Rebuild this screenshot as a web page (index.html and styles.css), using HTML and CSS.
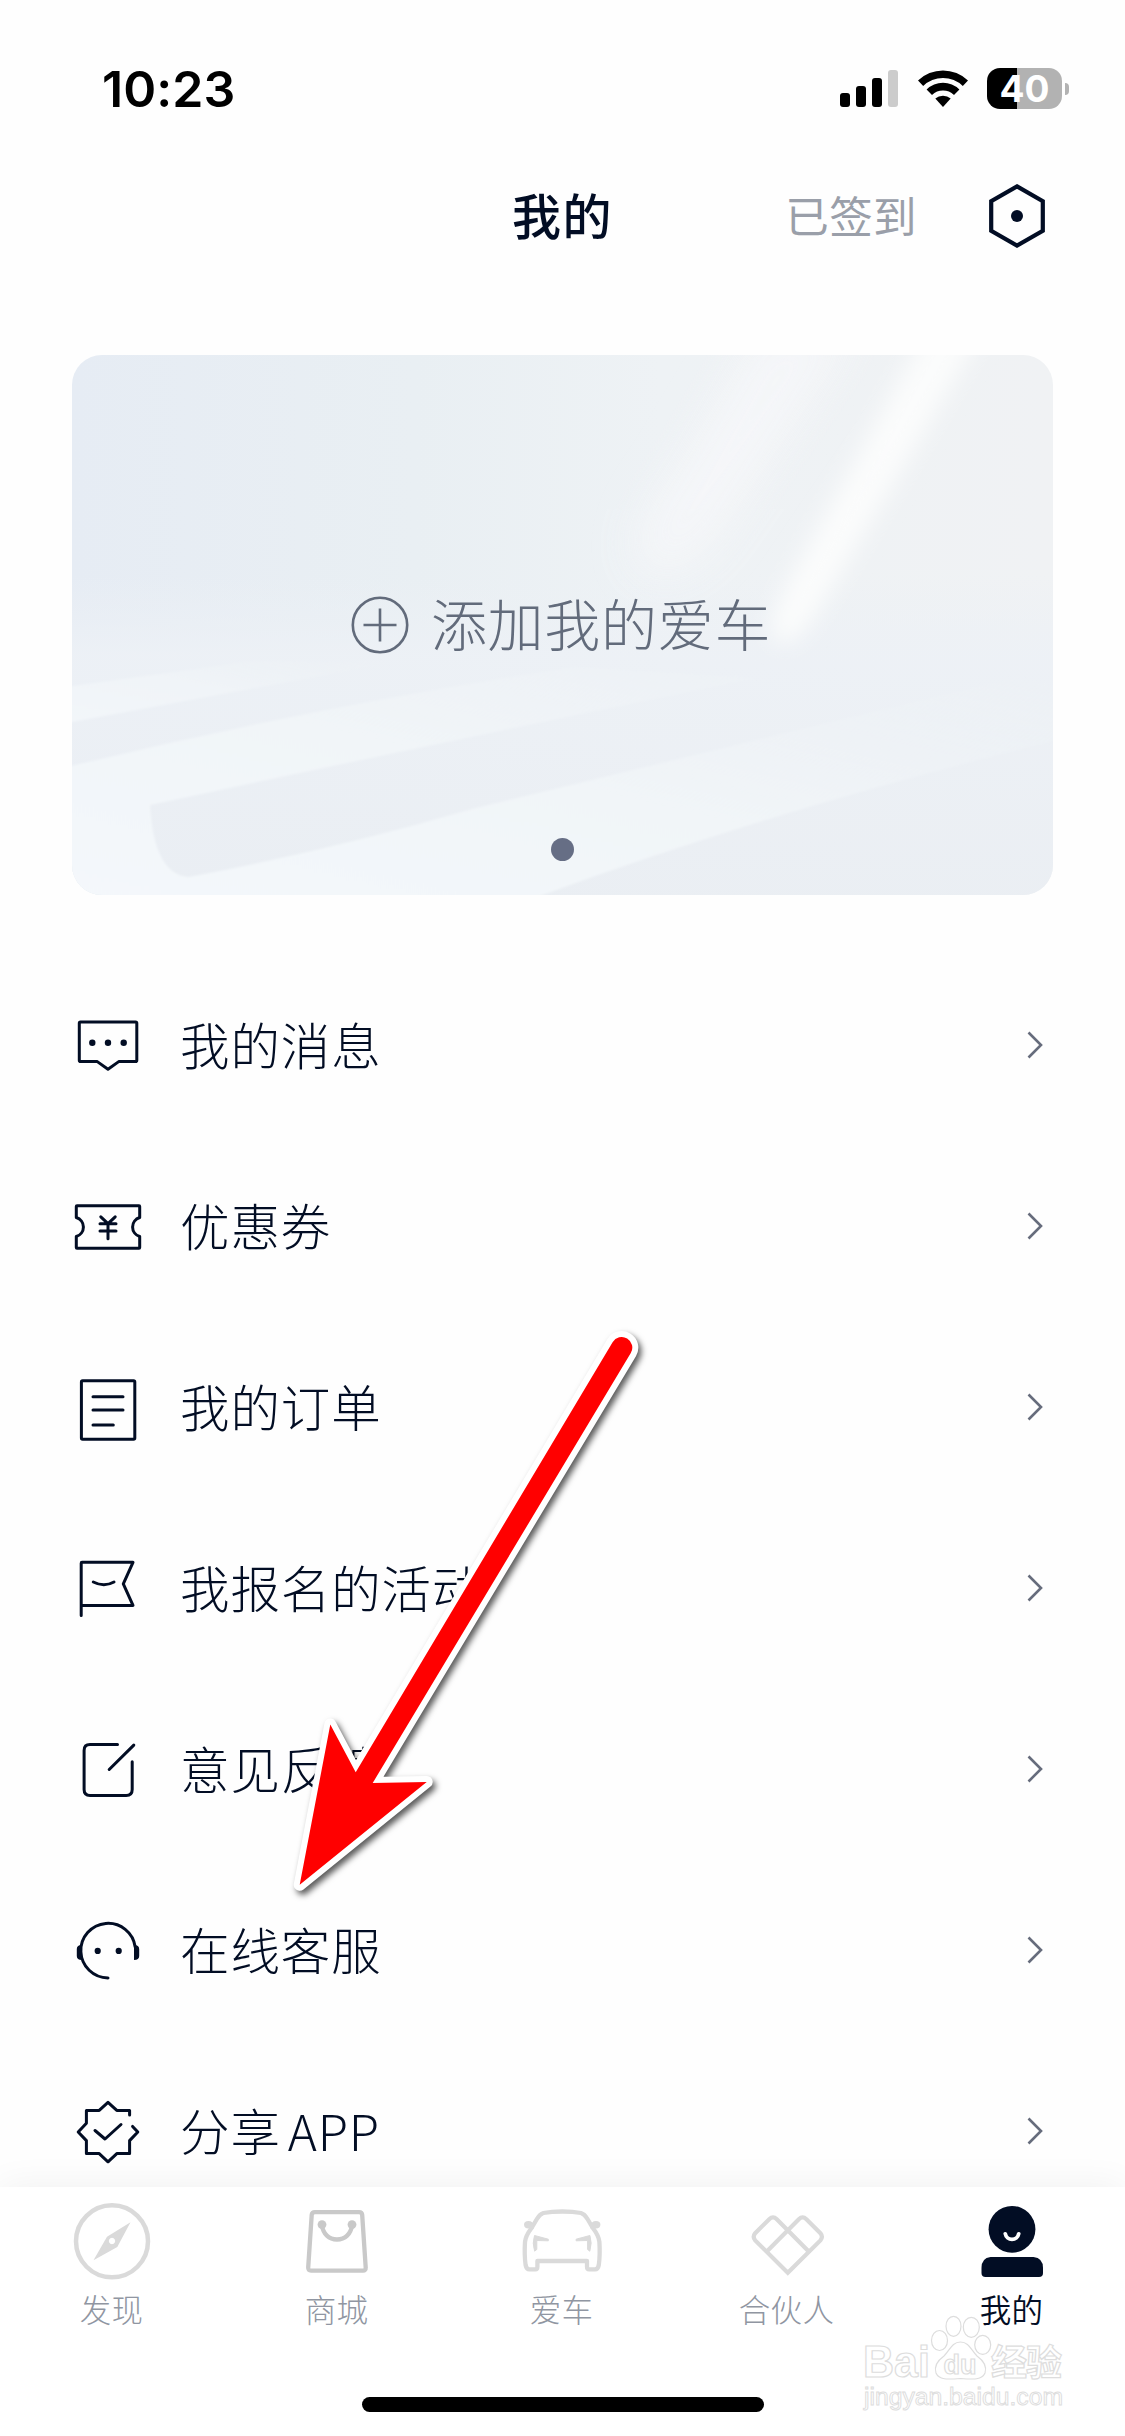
FILE: index.html
```html
<!DOCTYPE html>
<html lang="zh-CN">
<head>
    <meta charset="UTF-8">
    <meta name="viewport" content="width=device-width, initial-scale=1.0">
    <title>我的</title>
    <link rel="stylesheet" href="styles.css">
</head>
<body>
    <div class="phone">
        <div class="status-bar">
            <div class="time">10:23</div>
            <div class="status-icons">
                <svg class="signal" width="58" height="37" viewBox="0 0 58 37">
                    <rect x="0" y="23" width="10" height="14" rx="3"/>
                    <rect x="16" y="16" width="10" height="21" rx="3"/>
                    <rect x="32" y="8" width="10" height="29" rx="3"/>
                    <rect x="48" y="0" width="10" height="37" rx="3" fill="#ccc"/>
                </svg>
                <svg class="wifi" width="50" height="37" viewBox="0 0 50 37">
                    <path d="M0 10.6A36 36 0 0 1 50 10.6L44.8 16A28.3 28.3 0 0 0 5.2 16Z"/>
                    <path d="M8.6 19.4A23.5 23.5 0 0 1 41.4 19.4L36 25A16 16 0 0 0 14 25Z"/>
                    <path d="M17.3 28.6A11.5 11.5 0 0 1 32.7 28.6L25 37Z"/>
                </svg>
                <div class="battery"><span>40</span></div>
                <div class="battery-tip"></div>
            </div>
        </div>

        <div class="header">
            <div class="header-title">我的</div>
            <div class="header-right">
                <span class="signed">已签到</span>
                <svg width="56" height="64" viewBox="0 0 56 64">
                    <path d="M28 2.4L53.8 17.2V46.8L28 61.6L2.2 46.8V17.2Z" fill="none" stroke="#020d24" stroke-width="4.2"/>
                    <circle cx="28" cy="32" r="6" fill="#020d24"/>
                </svg>
            </div>
        </div>

        <div class="car-card">
            <svg class="card-bg" width="981" height="540" viewBox="0 0 981 540">
                <defs>
                    <linearGradient id="base" x1="0" y1="0" x2="1" y2="0">
                        <stop offset="0" stop-color="#e6ecf4"/>
                        <stop offset="0.35" stop-color="#e9eff3"/>
                        <stop offset="0.6" stop-color="#eef2f5"/>
                        <stop offset="1" stop-color="#f0f2f4"/>
                    </linearGradient>
                    <linearGradient id="floor" x1="0" y1="0" x2="0" y2="1">
                        <stop offset="0" stop-color="#ecf0f5" stop-opacity="0"/>
                        <stop offset="0.25" stop-color="#edf1f6"/>
                        <stop offset="1" stop-color="#eaeef3"/>
                    </linearGradient>
                    <linearGradient id="strip" x1="0" y1="1" x2="1" y2="0">
                        <stop offset="0" stop-color="#f4f8fb"/>
                        <stop offset="0.5" stop-color="#f1f5f8"/>
                        <stop offset="1" stop-color="#edf1f5" stop-opacity="0.3"/>
                    </linearGradient>
                    <filter id="soft" x="-50%" y="-50%" width="200%" height="200%"><feGaussianBlur stdDeviation="22"/></filter>
                    <filter id="edge" x="-50%" y="-50%" width="200%" height="200%"><feGaussianBlur stdDeviation="11"/></filter>
                    <filter id="slight"><feGaussianBlur stdDeviation="1.2"/></filter>
                </defs>
                <rect width="981" height="540" fill="url(#base)"/>
                <path d="M690 -30H790L640 190Q590 240 565 205Q560 170 600 120Z" fill="#f6f7f9" filter="url(#soft)" opacity="0.85"/>
                <rect y="220" width="981" height="320" fill="url(#floor)" opacity="0.9"/>
                <path d="M858 -30H914L748 252Q720 300 702 284Q694 270 712 235Z" fill="#fbfcfc" filter="url(#edge)"/>
                <g filter="url(#slight)">
                    <path d="M-5 332L181 306L323 307L-5 368Z" fill="url(#strip)" opacity="0.8"/>
                    <path d="M-5 412Q250 350 503 312L684 323Q380 385 78 450Q82 520 117 522Q260 495 400 454L941 323L985 330V385Q700 455 465 542H-5Z" fill="url(#strip)"/>
                </g>
            </svg>
            <div class="add-car">
                <svg width="58" height="58" viewBox="0 0 58 58" fill="none" stroke="#626b7b" stroke-width="2.6">
                    <circle cx="29" cy="29" r="27.2"/>
                    <path d="M12.5 29H45.5M29 12.5V45.5"/>
                </svg>
                <span class="add-car-text">添加我的爱车</span>
            </div>
            <div class="dot"></div>
        </div>

        <div class="menu">
            <div class="menu-item">
                <svg class="icon" viewBox="0 0 72 72">
                    <path d="M8.5 13H63.5Q64.8 13 64.8 14.3V51.3Q64.8 52.6 63.5 52.6H46.7L36 60.2L25.3 52.6H8.5Q7.3 52.6 7.3 51.3V14.3Q7.3 13 8.5 13Z"/>
                    <circle class="solid" cx="20.3" cy="33.7" r="3.2"/>
                    <circle class="solid" cx="36" cy="33.7" r="3.2"/>
                    <circle class="solid" cx="51.7" cy="33.7" r="3.2"/>
                </svg>
                <span class="label">我的消息</span>
                <svg class="chevron" viewBox="0 0 16 28"><path d="M1.5 1.5L14 14L1.5 26.5"/></svg>
            </div>
            <div class="menu-item">
                <svg class="icon" viewBox="0 0 72 72">
                    <path d="M5 15.8H67Q67.7 15.8 67.7 16.5V27.5A9.9 9.9 0 0 0 67.7 46.5V57.5Q67.7 58.2 67 58.2H5Q4.3 58.2 4.3 57.5V46.5A9.9 9.9 0 0 0 4.3 27.5V16.5Q4.3 15.8 5 15.8Z"/>
                    <path d="M28.8 26.8L36 33.7L43.2 26.8M28 33.7H44M28 41H44M36 33.7V48.8"/>
                </svg>
                <span class="label">优惠券</span>
                <svg class="chevron" viewBox="0 0 16 28"><path d="M1.5 1.5L14 14L1.5 26.5"/></svg>
            </div>
            <div class="menu-item">
                <svg class="icon" viewBox="0 0 72 72">
                    <rect x="9.4" y="9.8" width="53.4" height="58.5" rx="1.2"/>
                    <path d="M21 25.7H51M21 39H51M21 54H41.3"/>
                </svg>
                <span class="label">我的订单</span>
                <svg class="chevron" viewBox="0 0 16 28"><path d="M1.5 1.5L14 14L1.5 26.5"/></svg>
            </div>
            <div class="menu-item">
                <svg class="icon" viewBox="0 0 72 72">
                    <path d="M9.2 63.5V11.2Q9.2 10.3 10 10.3H61L51.3 31.8L61 53.4H9.2"/>
                    <path d="M21.3 30Q32 35.5 42 30"/>
                </svg>
                <span class="label">我报名的活动</span>
                <svg class="chevron" viewBox="0 0 16 28"><path d="M1.5 1.5L14 14L1.5 26.5"/></svg>
            </div>
            <div class="menu-item">
                <svg class="icon" viewBox="0 0 72 72">
                    <path d="M45.5 11.6H18Q12.1 11.6 12.1 17.5V56.6Q12.1 62.5 18 62.5H54.2Q60.2 62.5 60.2 56.6V28.8"/>
                    <path d="M61.8 12.1L37.2 36.5"/>
                </svg>
                <span class="label">意见反馈</span>
                <svg class="chevron" viewBox="0 0 16 28"><path d="M1.5 1.5L14 14L1.5 26.5"/></svg>
            </div>
            <div class="menu-item">
                <svg class="icon" viewBox="0 0 72 72">
                    <path d="M36 63.9A27.3 27.3 0 1 1 63.2 33"/>
                    <path class="solid" d="M9.8 31Q4.8 31 4.8 35V42Q4.8 46 9.8 46ZM62 31Q67.2 31 67.2 35V42Q67.2 46 62 46Z"/>
                    <circle class="solid" cx="25.7" cy="36.9" r="3.1"/>
                    <circle class="solid" cx="46.7" cy="36.9" r="3.1"/>
                </svg>
                <span class="label">在线客服</span>
                <svg class="chevron" viewBox="0 0 16 28"><path d="M1.5 1.5L14 14L1.5 26.5"/></svg>
            </div>
            <div class="menu-item">
                <svg class="icon" viewBox="0 0 72 72">
                    <path d="M57.6 20V15.4H44.8L36 7.3L27.2 15.4H14.4V28.2L6.2 37L14.4 45.6V58.6H27.2L36 66.8L44.8 58.6H57.6V45.6L65.8 37L60.6 31.4"/>
                    <path d="M23 35.5L33 44L49 29.5"/>
                </svg>
                <span class="label">分享 APP</span>
                <svg class="chevron" viewBox="0 0 16 28"><path d="M1.5 1.5L14 14L1.5 26.5"/></svg>
            </div>
        </div>

        <div class="tab-bar">
            <div class="tabs">
                <div class="tab">
                    <svg width="84" height="84" viewBox="0 0 84 84">
                        <circle cx="41" cy="42.3" r="36" fill="none" stroke="#dadada" stroke-width="4.5"/>
                        <path fill="#dadada" fill-rule="evenodd" d="M59.5 23.3L46.3 48L22.5 61.3L36 37.7ZM41 38.8a3.2 3.2 0 1 0 .01 0Z"/>
                    </svg>
                    <span>发现</span>
                </div>
                <div class="tab">
                    <svg width="84" height="84" viewBox="0 0 84 84" fill="none" stroke="#c9c9c9" stroke-width="4.3">
                        <path d="M19 13.2H63Q66 13.2 66.2 16L69.7 68.5Q69.8 71.6 67 71.6H15Q12 71.6 12.2 68.5L15.7 16Q15.9 13.2 19 13.2Z"/>
                        <path d="M26 26C27 35 33 40.5 41 40.5S55 35 56 26"/>
                        <circle cx="26" cy="25.6" r="4.4" fill="#c9c9c9" stroke="none"/>
                        <circle cx="56" cy="25.6" r="4.4" fill="#c9c9c9" stroke="none"/>
                    </svg>
                    <span>商城</span>
                </div>
                <div class="tab">
                    <svg width="84" height="84" viewBox="0 0 84 84" fill="none" stroke="#dadada" stroke-width="4.3" stroke-linejoin="round">
                        <path d="M41.2 12.5Q52 12.5 60 14Q63.5 15 66.5 20L71.5 28.5Q78 37 78.4 43Q79.2 56 77.8 66Q77 70.3 74 70.3H68Q66 70.3 66 67.5V62H16.4V67.5Q16.4 70.3 14.4 70.3H8.4Q5.4 70.3 4.6 66Q3.2 56 4 43Q4.4 37 10.9 28.5L15.9 20Q18.9 15 22.4 14Q30.4 12.5 41.2 12.5Z"/>
                        <path d="M13 29.5H7.5Q3 29.5 3 25.5Q3 22 7.5 22Q12 22 13 27ZM69.4 29.5H74.9Q79.4 29.5 79.4 25.5Q79.4 22 74.9 22Q70.4 22 69.4 27Z" fill="#dadada" stroke="none"/>
                        <path d="M13.5 36.5L27.3 40.2V41.8L15.8 41.5V50.5L13.6 52.2Q11 44 13.5 36.5ZM68.9 36.5L55.1 40.2V41.8L66.6 41.5V50.5L68.8 52.2Q71.4 44 68.9 36.5Z" fill="#dadada" stroke-width="1"/>
                    </svg>
                    <span>爱车</span>
                </div>
                <div class="tab">
                    <svg width="84" height="84" viewBox="0 0 84 84" fill="none" stroke="#dadada" stroke-width="4.2">
                        <path d="M62.3 52L30.8 20.2Q27 16.6 23.2 20.2L9.2 34.2Q6.2 37.8 9.2 41.4L41.8 73.8L74.4 41.4Q77.4 37.8 74.4 34.2L60.4 20.2Q56.6 16.6 52.8 20.2L21.3 52"/>
                    </svg>
                    <span>合伙人</span>
                </div>
                <div class="tab active">
                    <svg width="84" height="84" viewBox="0 0 84 84">
                        <circle cx="41" cy="30.3" r="23.4" fill="#020d24"/>
                        <path d="M34.3 34.8A6.8 6.8 0 0 0 47.7 34.8" fill="none" stroke="#fff" stroke-width="3.8" stroke-linecap="round"/>
                        <path d="M19.5 58H62.5Q72 59 72 69V74Q72 78 68 78H14.5Q10.5 78 10.5 74V69Q10.5 59 19.5 58Z" fill="#020d24"/>
                    </svg>
                    <span>我的</span>
                </div>
            </div>
            <div class="home-indicator"></div>
        </div>

        <!-- pointer to the customer service row -->
        <svg class="arrow" width="370" height="590" viewBox="280 1320 370 590">
            <path d="M299.7 1884.8L330.3 1724.5L355.7 1772.3L612.6 1342.2A10.6 10.6 0 0 1 630.8 1353.1L372.7 1783L426.7 1781.9Z"/>
            <path class="fill" d="M299.7 1884.8L330.3 1724.5L355.7 1772.3L612.6 1342.2A10.6 10.6 0 0 1 630.8 1353.1L372.7 1783L426.7 1781.9Z"/>
        </svg>

        <svg class="watermark" width="220" height="110" viewBox="855 2310 220 110">
            <text x="863" y="2377" font-size="44" textLength="67" lengthAdjust="spacingAndGlyphs">Bai</text>
            <ellipse cx="939.5" cy="2340.5" rx="8" ry="10"/>
            <ellipse cx="953.5" cy="2326.3" rx="7.5" ry="10"/>
            <ellipse cx="971.3" cy="2327.3" rx="8" ry="10"/>
            <ellipse cx="982.7" cy="2344.8" rx="8" ry="9.5"/>
            <path d="M960.5 2342C969 2342 971 2350 977 2356C984 2361 987 2367 985 2373C982 2380 974 2379.5 960.5 2378.5C947 2379.5 939 2380 936 2373C934 2367 937 2361 944 2356C950 2350 952 2342 960.5 2342Z"/>
            <text x="943.5" y="2374" font-size="27" textLength="33" lengthAdjust="spacingAndGlyphs">du</text>
            <text class="cjk" x="991" y="2376" font-size="36" textLength="71">经验</text>
            <text class="url" x="864" y="2405" font-size="23" textLength="199" lengthAdjust="spacingAndGlyphs">jingyan.baidu.com</text>
        </svg>
    </div>
</body>
</html>
```
FILE: styles.css
```css
body {
    margin: 0;
    background-color: #fefefe;
    font-family: 'Noto Sans CJK SC', sans-serif;
    color: #020d24;
}
.phone {
    position: relative;
    width: 1125px;
    height: 2436px;
    overflow: hidden;
}
.status-bar {
    display: flex;
    justify-content: space-between;
    align-items: center;
    height: 177px;
    box-sizing: border-box;
    padding: 0 56px 0 102px;
}
.time {
    font-family: Inter, sans-serif;
    font-size: 50px;
    font-weight: 600;
    color: #000;
    letter-spacing: 0.1px;
}
.status-icons {
    display: flex;
    align-items: center;
}
.signal { margin-right: 19.5px; }
.wifi { margin-right: 19.5px; }
.battery {
    width: 75px;
    height: 41px;
    border-radius: 13px;
    background: linear-gradient(90deg, #000 30px, #b2b2b2 30px);
    color: #fff;
    font-family: Inter, sans-serif;
    font-size: 37px;
    font-weight: 650;
    line-height: 41px;
    text-align: center;
}
.battery-tip {
    width: 4px;
    height: 12px;
    margin-left: 3px;
    border-radius: 0 4px 4px 0;
    background-color: #b2b2b2;
}
.header {
    display: grid;
    grid-template-columns: 1fr auto 1fr;
    align-items: center;
    height: 78px;
    padding: 0 80px;
    margin-bottom: 100px;
}
.header-title {
    grid-column: 2;
    padding-bottom: 5px;
    font-size: 49px;
    font-weight: 500;
    letter-spacing: 1.4px;
}
.header-right {
    display: flex;
    justify-content: flex-end;
    align-items: center;
    gap: 72px;
}
.signed {
    padding-bottom: 4px;
    font-size: 43.5px;
    letter-spacing: 0.4px;
    color: #9a9fa9;
    font-weight: 400;
}
.car-card {
    position: relative;
    display: flex;
    justify-content: center;
    align-items: center;
    width: 981px;
    height: 540px;
    margin: 0 auto 59.5px;
    border-radius: 30px;
    overflow: hidden;
}
.card-bg {
    position: absolute;
    top: 0;
    left: 0;
}
.add-car {
    position: relative;
    display: flex;
    align-items: center;
    gap: 22px;
    padding-right: 3px;
    font-size: 56px;
    font-weight: 300;
    letter-spacing: 0.7px;
    color: #626b7b;
}
.add-car-text {
    padding-bottom: 8px;
}
.label {
    padding-bottom: 4px;
}
.dot {
    position: absolute;
    bottom: 34px;
    left: 479px;
    width: 23px;
    height: 23px;
    border-radius: 50%;
    background-color: #666e85;
}
.menu-item {
    display: flex;
    align-items: center;
    height: 181px;
    padding: 0 82px 0 72px;
    font-size: 49.5px;
    font-weight: 300;
    letter-spacing: 0.9px;
    word-spacing: -5px;
}
.icon {
    width: 72px;
    height: 72px;
    margin-right: 36px;
    fill: none;
    stroke: #020d24;
    stroke-width: 3;
    stroke-linecap: round;
    stroke-linejoin: round;
}
.icon .solid {
    fill: #020d24;
    stroke: none;
}
.chevron {
    width: 16px;
    height: 28px;
    margin-left: auto;
    fill: none;
    stroke: #666c7c;
    stroke-width: 2.6;
}
.tab-bar {
    position: absolute;
    left: 0;
    bottom: 0;
    width: 1125px;
    height: 249px;
    background-color: #fff;
    box-shadow: 0 0 36px rgba(0, 0, 0, 0.06);
}
.tabs {
    display: flex;
    height: 138px;
    padding-top: 12px;
}
.tab {
    flex: 1;
    display: flex;
    flex-direction: column;
    align-items: center;
    font-size: 31.5px;
    line-height: 51px;
    font-weight: 300;
    letter-spacing: 0.3px;
    color: #9096a2;
}
.tab span {
    padding-right: 2px;
}
.tab.active {
    color: #020d24;
    font-weight: 350;
}
.home-indicator {
    width: 402px;
    height: 15px;
    margin: 60px auto 0;
    border-radius: 8px;
    background-color: #000;
}
.arrow {
    position: absolute;
    left: 280px;
    top: 1320px;
    fill: #fff;
    stroke: #fff;
    stroke-width: 12;
    stroke-linejoin: round;
    filter: drop-shadow(3px 4px 3px rgba(0, 0, 0, 0.65));
}
.arrow .fill {
    fill: #f00;
    stroke: none;
}
.watermark {
    position: absolute;
    left: 855px;
    top: 2310px;
    font-family: 'Liberation Sans', sans-serif;
    font-weight: 700;
    fill: #fff;
    stroke: #ddd;
    stroke-width: 1.2;
}
.watermark .cjk { font-family: 'Noto Sans CJK SC', sans-serif; }
.watermark .url {
    font-weight: 400;
    stroke-width: 0.9;
}
```
